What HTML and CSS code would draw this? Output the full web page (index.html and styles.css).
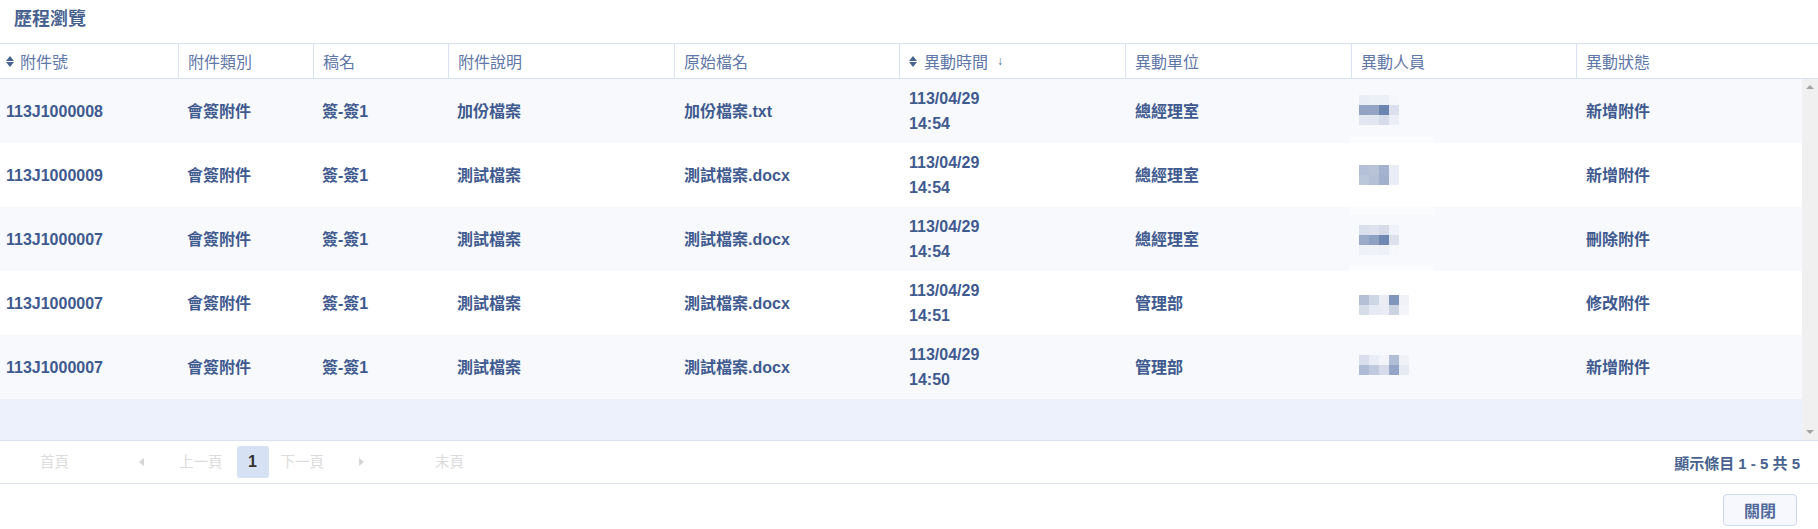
FILE: index.html
```html
<!DOCTYPE html>
<html lang="zh-Hant">
<head>
    <meta charset="UTF-8">
    <title>歷程瀏覽</title>
    <link rel="stylesheet" href="styles.css">
</head>
<body>
    <h1 class="title">歷程瀏覽</h1>

    <div class="grid-head">
        <div class="head-cell c1"><span class="sort"></span>附件號</div>
        <div class="head-cell c2">附件類別</div>
        <div class="head-cell c3">稿名</div>
        <div class="head-cell c4">附件說明</div>
        <div class="head-cell c5">原始檔名</div>
        <div class="head-cell c6"><span class="sort"></span>異動時間<span class="sort-down">↓</span></div>
        <div class="head-cell c7">異動單位</div>
        <div class="head-cell c8">異動人員</div>
        <div class="head-cell c9">異動狀態</div>
    </div>

    <div class="grid-body">
        <div class="rows">
            <div class="row alt">
                <div class="cell c1">113J1000008</div>
                <div class="cell c2">會簽附件</div>
                <div class="cell c3">簽-簽1</div>
                <div class="cell c4">加份檔案</div>
                <div class="cell c5">加份檔案.txt</div>
                <div class="cell c6">113/04/29<br>14:54</div>
                <div class="cell c7">總經理室</div>
                <div class="cell c8">
                    <svg class="mosaic" width="84" height="64" viewBox="0 0 84 64">
                        <rect y="57" width="84" height="7" fill="#fbfcfe"/>
                        <rect x="10" y="16" width="10" height="10" fill="#e9edf5"/><rect x="20" y="16" width="20" height="10" fill="#ebeff6"/><rect x="40" y="16" width="10" height="10" fill="#f6f7fb"/>
                        <rect x="10" y="26" width="20" height="10" fill="#92a3c4"/><rect x="30" y="26" width="10" height="10" fill="#6c84b0"/><rect x="40" y="26" width="10" height="10" fill="#dae0ee"/>
                        <rect x="10" y="36" width="10" height="10" fill="#e2e6f1"/><rect x="20" y="36" width="10" height="10" fill="#e0e5f0"/><rect x="30" y="36" width="10" height="10" fill="#d5dbe9"/><rect x="40" y="36" width="10" height="10" fill="#eceef6"/>
                    </svg>
                </div>
                <div class="cell c9">新增附件</div>
            </div>
            <div class="row">
                <div class="cell c1">113J1000009</div>
                <div class="cell c2">會簽附件</div>
                <div class="cell c3">簽-簽1</div>
                <div class="cell c4">測試檔案</div>
                <div class="cell c5">測試檔案.docx</div>
                <div class="cell c6">113/04/29<br>14:54</div>
                <div class="cell c7">總經理室</div>
                <div class="cell c8">
                    <svg class="mosaic" width="84" height="64" viewBox="0 0 84 64">
                        <rect x="10" y="22" width="10" height="10" fill="#b3c0d8"/><rect x="20" y="22" width="10" height="10" fill="#b8c3d8"/><rect x="30" y="22" width="10" height="10" fill="#a3b3cf"/><rect x="40" y="22" width="10" height="10" fill="#e9edf5"/>
                        <rect x="10" y="32" width="10" height="10" fill="#bac6da"/><rect x="20" y="32" width="10" height="10" fill="#b3c0d6"/><rect x="30" y="32" width="10" height="10" fill="#a0b0cd"/><rect x="40" y="32" width="10" height="10" fill="#e9edf5"/>
                    </svg>
                </div>
                <div class="cell c9">新增附件</div>
            </div>
            <div class="row alt">
                <div class="cell c1">113J1000007</div>
                <div class="cell c2">會簽附件</div>
                <div class="cell c3">簽-簽1</div>
                <div class="cell c4">測試檔案</div>
                <div class="cell c5">測試檔案.docx</div>
                <div class="cell c6">113/04/29<br>14:54</div>
                <div class="cell c7">總經理室</div>
                <div class="cell c8">
                    <svg class="mosaic" width="84" height="64" viewBox="0 0 84 64">
                        <rect width="84" height="8" fill="#fbfcfe"/>
                        <rect y="58" width="84" height="6" fill="#fbfcfe"/>
                        <rect x="10" y="18" width="10" height="10" fill="#d9dfec"/><rect x="20" y="18" width="10" height="10" fill="#dde2ee"/><rect x="30" y="18" width="10" height="10" fill="#d5dbe9"/><rect x="40" y="18" width="10" height="10" fill="#f0f2f9"/>
                        <rect x="10" y="28" width="10" height="10" fill="#9aaac8"/><rect x="20" y="28" width="10" height="10" fill="#8ea1c3"/><rect x="30" y="28" width="10" height="10" fill="#6f87b3"/><rect x="40" y="28" width="10" height="10" fill="#dbe1ed"/>
                        <rect x="10" y="38" width="10" height="10" fill="#eff1f8"/><rect x="20" y="38" width="10" height="10" fill="#f0f2f9"/><rect x="30" y="38" width="10" height="10" fill="#eef0f7"/><rect x="40" y="38" width="10" height="10" fill="#f6f7fb"/>
                    </svg>
                </div>
                <div class="cell c9">刪除附件</div>
            </div>
            <div class="row">
                <div class="cell c1">113J1000007</div>
                <div class="cell c2">會簽附件</div>
                <div class="cell c3">簽-簽1</div>
                <div class="cell c4">測試檔案</div>
                <div class="cell c5">測試檔案.docx</div>
                <div class="cell c6">113/04/29<br>14:51</div>
                <div class="cell c7">管理部</div>
                <div class="cell c8">
                    <svg class="mosaic" width="84" height="64" viewBox="0 0 84 64">
                        <rect x="10" y="24" width="10" height="10" fill="#b5c0d7"/><rect x="20" y="24" width="10" height="10" fill="#cdd6e4"/><rect x="30" y="24" width="10" height="10" fill="#e9ecf4"/><rect x="40" y="24" width="10" height="10" fill="#8095bc"/><rect x="50" y="24" width="10" height="10" fill="#f0f2f8"/>
                        <rect x="10" y="34" width="10" height="10" fill="#d6dde9"/><rect x="20" y="34" width="10" height="10" fill="#e6eaf3"/><rect x="30" y="34" width="10" height="10" fill="#e9ecf4"/><rect x="40" y="34" width="10" height="10" fill="#cbd3e2"/><rect x="50" y="34" width="10" height="10" fill="#f3f5fa"/>
                    </svg>
                </div>
                <div class="cell c9">修改附件</div>
            </div>
            <div class="row alt">
                <div class="cell c1">113J1000007</div>
                <div class="cell c2">會簽附件</div>
                <div class="cell c3">簽-簽1</div>
                <div class="cell c4">測試檔案</div>
                <div class="cell c5">測試檔案.docx</div>
                <div class="cell c6">113/04/29<br>14:50</div>
                <div class="cell c7">管理部</div>
                <div class="cell c8">
                    <svg class="mosaic" width="84" height="64" viewBox="0 0 84 64">
                        <rect x="10" y="20" width="10" height="10" fill="#d8deeb"/><rect x="20" y="20" width="10" height="10" fill="#e9edf5"/><rect x="30" y="20" width="10" height="10" fill="#f2f4f9"/><rect x="40" y="20" width="10" height="10" fill="#b0bed6"/><rect x="50" y="20" width="10" height="10" fill="#f0f2f8"/>
                        <rect x="10" y="30" width="10" height="10" fill="#aebcd5"/><rect x="20" y="30" width="10" height="10" fill="#c0cadf"/><rect x="30" y="30" width="10" height="10" fill="#d5dbe9"/><rect x="40" y="30" width="10" height="10" fill="#93a6c7"/><rect x="50" y="30" width="10" height="10" fill="#e6eaf3"/>
                    </svg>
                </div>
                <div class="cell c9">新增附件</div>
            </div>
        </div>
        <div class="scrollbar">
            <span class="scroll-up"></span>
            <span class="scroll-down"></span>
        </div>
    </div>

    <div class="pager">
        <a class="page-link first">首頁</a>
        <span class="arrow-left"></span>
        <a class="page-link prev">上一頁</a>
        <span class="page-num">1</span>
        <a class="page-link next">下一頁</a>
        <span class="arrow-right"></span>
        <a class="page-link last">末頁</a>
        <span class="page-info">顯示條目 1 - 5 共 5</span>
    </div>

    <div class="actions">
        <button class="btn-close" type="button">關閉</button>
    </div>
</body>
</html>
```

FILE: styles.css
```css
* {
    margin: 0;
    padding: 0;
    box-sizing: border-box;
}

body {
    font-family: "Liberation Sans", "Noto Sans CJK TC", sans-serif;
    background: #fff;
    color: #3f5a8f;
    width: 1818px;
    height: 529px;
    overflow: hidden;
}

.title {
    height: 43px;
    padding: 8px 0 0 14px;
    font-size: 18px;
    line-height: 22px;
    font-weight: bold;
    color: #47618f;
}

.grid-head {
    display: flex;
    height: 36px;
    border-top: 1px solid #d8e2f2;
    border-bottom: 1px solid #d8e2f2;
}

.head-cell {
    display: flex;
    align-items: center;
    padding-left: 9px;
    font-size: 16px;
    color: #5f78a8;
    border-left: 1px solid #d8e2f2;
}

.head-cell.c1 {
    padding-left: 6px;
    border-left: none;
}

.c1 { width: 178px; }
.c2 { width: 135px; }
.c3 { width: 135px; }
.c4 { width: 226px; }
.c5 { width: 225px; }
.c6 { width: 226px; }
.c7 { width: 226px; }
.c8 { width: 225px; }
.c9 { flex: 1; }

.sort {
    position: relative;
    width: 8px;
    height: 11px;
    margin-right: 6px;
}

.head-cell.c6 .sort {
    margin-right: 7px;
}

.sort::before,
.sort::after {
    content: "";
    position: absolute;
    left: 0;
    border-left: 4px solid transparent;
    border-right: 4px solid transparent;
}

.sort::before {
    top: 0;
    border-bottom: 5px solid #48638f;
}

.sort::after {
    bottom: 0;
    border-top: 5px solid #48638f;
}

.sort-down {
    margin-left: 9px;
    font-size: 12px;
    font-weight: bold;
    color: #48638f;
}

.grid-body {
    display: flex;
    height: 361px;
    background: #ecf1fc;
}

.rows {
    flex: 1;
}

.row {
    display: flex;
    height: 64px;
    background: #fff;
}

.row.alt {
    background: #f7f9fc;
}

.cell {
    display: flex;
    align-items: center;
    padding-left: 10px;
    font-size: 16px;
    line-height: 25px;
    font-weight: bold;
}

.cell.c1 {
    padding-left: 6px;
}

.cell.c2,
.cell.c3,
.cell.c4 {
    padding-left: 9px;
}

.cell.c6 {
    display: block;
    padding-top: 7px;
}

.cell.c8 {
    padding-left: 0;
}

.mosaic {
    display: block;
    margin-left: -2px;
}

.scrollbar {
    display: flex;
    flex-direction: column;
    justify-content: space-between;
    align-items: center;
    width: 16px;
    padding: 6px 0;
    background: #f0f0f0;
}

.scroll-up {
    border-left: 4px solid transparent;
    border-right: 4px solid transparent;
    border-bottom: 4px solid #a3a3a3;
}

.scroll-down {
    border-left: 4px solid transparent;
    border-right: 4px solid transparent;
    border-top: 4px solid #a3a3a3;
}

.pager {
    display: flex;
    align-items: center;
    height: 44px;
    padding-right: 18px;
    border-top: 1px solid #d8e2f2;
    border-bottom: 1px solid #dde4f0;
    font-size: 14.5px;
    color: #dcdcdc;
}

.page-link {
    line-height: 20px;
}

.first { margin-left: 40px; }
.prev { margin-left: 35px; }
.next { margin-left: 12px; }
.last { margin-left: 71px; }

.arrow-left {
    margin-left: 70px;
    border-top: 4px solid transparent;
    border-bottom: 4px solid transparent;
    border-right: 5px solid #d4d4d4;
}

.arrow-right {
    margin-left: 35px;
    border-top: 4px solid transparent;
    border-bottom: 4px solid transparent;
    border-left: 5px solid #d4d4d4;
}

.page-num {
    display: flex;
    align-items: center;
    justify-content: center;
    width: 32px;
    height: 32px;
    margin-left: 14px;
    border-radius: 3px;
    background: #d6e1f3;
    color: #333;
    font-weight: bold;
    font-size: 16px;
}

.page-info {
    margin-left: auto;
    font-size: 15px;
    font-weight: bold;
    color: #47628f;
}

.actions {
    display: flex;
    justify-content: flex-end;
    padding: 10px 21px 0 0;
}

.btn-close {
    width: 74px;
    height: 32px;
    border: 1px solid #cdd9ee;
    border-radius: 4px;
    background: #f6f8fd;
    font-family: inherit;
    font-size: 16px;
    font-weight: bold;
    color: #50699a;
}
```
